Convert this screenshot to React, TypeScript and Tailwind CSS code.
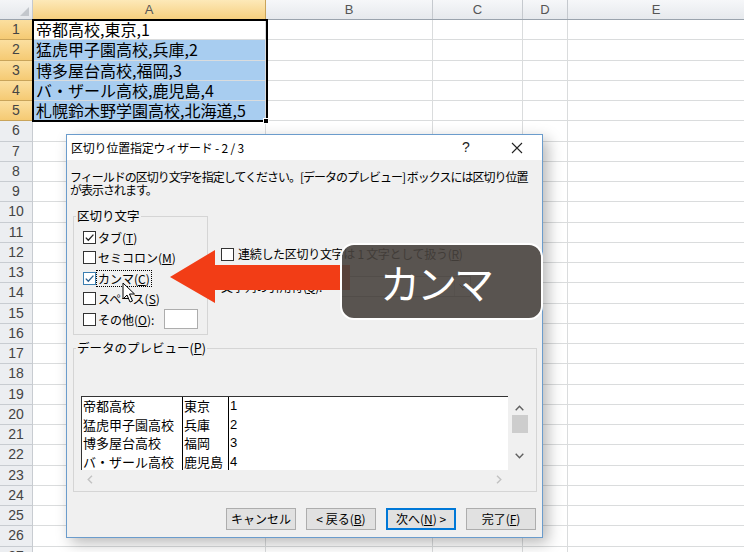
import React from "react";

const JP = "font-['Noto_Sans_CJK_JP',sans-serif]";

const cellsA = [
  "帝都高校,東京,1",
  "猛虎甲子園高校,兵庫,2",
  "博多屋台高校,福岡,3",
  "バ・ザール高校,鹿児島,4",
  "札幌鈴木野学園高校,北海道,5",
];

function Box({ checked, hover }: { checked?: boolean; hover?: boolean }) {
  return (
    <span
      className={
        "w-[13px] h-[13px] shrink-0 bg-white border flex items-center justify-center " +
        (hover ? "border-[#3c7fb1] bg-[#e5f1fb]" : "border-[#333333]")
      }
    >
      {checked && (
        <svg width="11" height="11" viewBox="0 0 11 11">
          <path
            d="M1.8 5.6 L4.3 8.2 L9.4 2.6"
            fill="none"
            stroke={hover ? "#2a5f8f" : "#222"}
            strokeWidth="1.3"
          />
        </svg>
      )}
    </span>
  );
}

function CheckRow({
  children,
  checked,
  hover,
  focus,
  extra,
}: {
  children: React.ReactNode;
  checked?: boolean;
  hover?: boolean;
  focus?: boolean;
  extra?: React.ReactNode;
}) {
  return (
    <div className="h-[20.5px] flex items-center">
      <Box checked={checked} hover={hover} />
      <span
        className={
          "ml-[1px] px-[1px] leading-[15px] " +
          (focus ? "outline outline-1 outline-dotted outline-black" : "")
        }
      >
        {children}
      </span>
      {extra}
    </div>
  );
}

function Sheet() {
  const rows = Array.from({ length: 27 }, (_, i) => i + 1);
  return (
    <div className="flex flex-col">
      <div className="flex h-[20px] border-b border-[#9aa3ad] font-['Liberation_Sans',sans-serif] text-[13px] text-[#555]">
        <div className="w-[33px] shrink-0 bg-linear-to-b from-[#f4f5f7] to-[#e4e7eb] border-r border-[#c5c9ce] relative">
          <svg className="absolute right-[3px] bottom-[3px]" width="9" height="9" viewBox="0 0 9 9">
            <path d="M9 0 L9 9 L0 9 Z" fill="#c3c7cc" />
          </svg>
        </div>
        <div className="w-[233px] shrink-0 bg-linear-to-b from-[#fde9b8] to-[#f6cf7e] border-r border-[#c9a45a] flex items-center justify-center">
          A
        </div>
        <div className="w-[167px] shrink-0 bg-linear-to-b from-[#f6f7f9] to-[#e6e9ed] border-r border-[#c5c9ce] flex items-center justify-center">
          B
        </div>
        <div className="w-[90px] shrink-0 bg-linear-to-b from-[#f6f7f9] to-[#e6e9ed] border-r border-[#c5c9ce] flex items-center justify-center">
          C
        </div>
        <div className="w-[45px] shrink-0 bg-linear-to-b from-[#f6f7f9] to-[#e6e9ed] border-r border-[#c5c9ce] flex items-center justify-center">
          D
        </div>
        <div className="flex-1 bg-linear-to-b from-[#f6f7f9] to-[#e6e9ed] flex items-center justify-center">
          E
        </div>
      </div>
      {rows.map((r) => {
        const sel = r <= 5;
        return (
          <div key={r} className="flex h-[20.25px] shrink-0">
            <div
              className={
                "w-[33px] shrink-0 border-r border-b flex items-center justify-center font-['Liberation_Sans',sans-serif] text-[14px] text-[#444] " +
                (sel
                  ? "bg-linear-to-b from-[#fbdf9f] to-[#f5ca73] border-[#c9a45a]"
                  : "bg-[#eceef1] border-[#c8ccd1]")
              }
            >
              {r}
            </div>
            <div
              className={
                "w-[233px] shrink-0 border-r border-b border-[#dadcdd] pl-[3px] text-[16px] leading-[19px] whitespace-nowrap overflow-visible text-black " +
                JP +
                (r >= 2 && r <= 5 ? " bg-[#a8cdf0]" : "")
              }
            >
              {r <= 5 ? cellsA[r - 1] : ""}
            </div>
            <div className="w-[167px] shrink-0 border-r border-b border-[#dadcdd]" />
            <div className="w-[90px] shrink-0 border-r border-b border-[#dadcdd]" />
            <div className="w-[45px] shrink-0 border-r border-b border-[#dadcdd]" />
            <div className="flex-1 border-b border-[#dadcdd]" />
          </div>
        );
      })}
    </div>
  );
}

function Btn({ children, focus }: { children: React.ReactNode; focus?: boolean }) {
  return (
    <div
      className={
        "w-[70px] h-[22px] flex items-center justify-center bg-[#e1e1e1] text-[12px] border " +
        (focus ? "border-[#0078d7] shadow-[inset_0_0_0_1px_#0078d7]" : "border-[#adadad]")
      }
    >
      {children}
    </div>
  );
}

function Dialog() {
  const preview = [
    ["帝都高校", "東京", "1"],
    ["猛虎甲子園高校", "兵庫", "2"],
    ["博多屋台高校", "福岡", "3"],
    ["バ・ザール高校", "鹿児島", "4"],
  ];
  return (
    <div
      className={
        "absolute left-[66px] top-[134px] w-[477px] h-[404px] border border-[#6b9ccc] bg-[#f0f0f0] shadow-[5px_5px_14px_rgba(0,0,0,0.28)] flex flex-col text-black text-[12px] " +
        JP
      }
    >
      <div className="h-[25px] bg-white flex items-center pl-[4px] shrink-0">
        <span className="flex-1 tracking-[-0.2px]">区切り位置指定ウィザード - 2 / 3</span>
        <span className="w-[14px] text-center text-[14px] font-['Liberation_Sans',sans-serif] text-[#222] mr-[38px]">?</span>
        <svg className="mr-[19px]" width="12" height="12" viewBox="0 0 12 12">
          <path d="M1 1 L11 11 M11 1 L1 11" stroke="#222" strokeWidth="1.1" />
        </svg>
      </div>
      <div className="flex-1 flex flex-col">
        <div className="pt-[10px] pl-[3px] leading-[13px] whitespace-nowrap tracking-[-1px]">
          <div>フィールドの区切り文字を指定してください。[データのプレビュー] ボックスには区切り位置</div>
          <div>が表示されます。</div>
        </div>
        <div className="flex mt-[12px] ml-[6px]">
          <fieldset className="w-[135px] h-[127px] border border-[#d5d5d5] shrink-0">
            <legend className="ml-[2px] px-[1px] leading-[16px] text-[12.5px]">区切り文字</legend>
            <div className="pl-[9px] pt-[3px] flex flex-col">
              <CheckRow checked>
                タブ(<u>T</u>)
              </CheckRow>
              <CheckRow>
                セミコロン(<u>M</u>)
              </CheckRow>
              <CheckRow checked hover focus>
                カンマ(<u>C</u>)
              </CheckRow>
              <CheckRow>
                スペース(<u>S</u>)
              </CheckRow>
              <CheckRow
                extra={<span className="ml-[9px] w-[34px] h-[20px] bg-white border border-[#adadad]" />}
              >
                その他(<u>O</u>):
              </CheckRow>
            </div>
          </fieldset>
          <div className="ml-[13px] mt-[36px] flex flex-col">
            <div className="h-[20px] flex items-center whitespace-nowrap">
              <Box />
              <span className="ml-[4px] tracking-[-0.3px]">
                連続した区切り文字は 1 文字として扱う(<u>R</u>)
              </span>
            </div>
            <div className="mt-[12px] h-[21px] flex items-center whitespace-nowrap">
              <span className="w-[119px] tracking-[-0.3px]">
                文字列の引用符(<u>Q</u>):
              </span>
              <div className="w-[131px] h-[21px] bg-white border border-[#adadad] flex items-center justify-between">
                <span className="pl-[4px] text-[11px]">"</span>
                <span className="w-[16px] h-full border-l border-[#d0d0d0] flex items-center justify-center">
                  <svg width="8" height="5" viewBox="0 0 8 5">
                    <path d="M0.5 0.5 L4 4 L7.5 0.5" fill="none" stroke="#555" />
                  </svg>
                </span>
              </div>
            </div>
          </div>
        </div>
        <fieldset className="mt-[5px] ml-[6px] w-[464px] h-[152px] border border-[#d5d5d5] shrink-0">
          <legend className="ml-[2px] px-[1px] leading-[16px] text-[12.5px]">
            データのプレビュー(<u>P</u>)
          </legend>
          <div className="ml-[7px] mt-[40px] w-[450px] flex flex-col">
            <div className="flex h-[74px]">
              <div className="flex-1 bg-white border-l border-t border-[#333] flex overflow-hidden text-[13px] leading-[18.5px]">
                <div className="w-[101px] border-r border-black pl-[1px] whitespace-nowrap">
                  {preview.map((p) => (
                    <div key={p[0]}>{p[0]}</div>
                  ))}
                </div>
                <div className="w-[46px] border-r border-black pl-[1px] whitespace-nowrap">
                  {preview.map((p) => (
                    <div key={p[1]}>{p[1]}</div>
                  ))}
                </div>
                <div className="flex-1 pl-[1px] font-['Liberation_Sans',sans-serif]">
                  {preview.map((p) => (
                    <div key={p[2]}>{p[2]}</div>
                  ))}
                </div>
              </div>
              <div className="w-[23px] flex flex-col items-center bg-[#f0f0f0]">
                <svg className="mt-[9px]" width="9" height="6" viewBox="0 0 9 6">
                  <path d="M0.7 5.2 L4.5 1.2 L8.3 5.2" fill="none" stroke="#606060" strokeWidth="1.4" />
                </svg>
                <div className="mt-[4px] w-[16px] h-[18px] bg-[#cdcdcd]" />
                <svg className="mt-[20px]" width="9" height="6" viewBox="0 0 9 6">
                  <path d="M0.7 0.8 L4.5 4.8 L8.3 0.8" fill="none" stroke="#606060" strokeWidth="1.4" />
                </svg>
              </div>
            </div>
            <div className="flex h-[18px]">
              <div className="flex-1 flex items-center justify-between px-[6px] bg-[#f0f0f0]">
                <svg width="6" height="9" viewBox="0 0 6 9">
                  <path d="M5 0.7 L1.2 4.5 L5 8.3" fill="none" stroke="#c2c2c2" strokeWidth="1.4" />
                </svg>
                <svg width="6" height="9" viewBox="0 0 6 9">
                  <path d="M1 0.7 L4.8 4.5 L1 8.3" fill="none" stroke="#c2c2c2" strokeWidth="1.4" />
                </svg>
              </div>
              <div className="w-[23px]" />
            </div>
          </div>
        </fieldset>
        <div className="mt-[16px] pr-[6px] flex justify-end gap-[10px]">
          <Btn>キャンセル</Btn>
          <Btn>
            &lt; 戻る(<u>B</u>)
          </Btn>
          <Btn focus>
            次へ(<u>N</u>) &gt;
          </Btn>
          <Btn>
            完了(<u>F</u>)
          </Btn>
        </div>
      </div>
    </div>
  );
}

export default function App() {
  return (
    <div className="relative w-[744px] h-[552px] overflow-hidden bg-white">
      <Sheet />
      {/* selection border over A1:A5 */}
      <div className="absolute left-[32px] top-[19px] w-[236px] h-[103px] border-2 border-black pointer-events-none" />
      <div className="absolute left-[263px] top-[118px] w-[6px] h-[6px] bg-black border border-white" />
      <Dialog />
      {/* red arrow */}
      <svg className="absolute left-[165px] top-[245px]" width="185" height="63" viewBox="0 0 185 63">
        <polygon points="5,32 50,5 50,20 185,20 185,45 50,45 50,58" fill="#f23d16" />
      </svg>
      {/* caption */}
      <div
        className={
          "absolute left-[340px] top-[243px] w-[203px] h-[77px] rounded-[14px] border-2 border-white bg-[rgba(72,67,62,0.9)] flex items-center justify-center text-white text-[40px] leading-none tracking-[-3px] pr-[12px] " +
          JP
        }
      >
        カンマ
      </div>
      {/* mouse cursor */}
      <svg className="absolute left-[122px] top-[282px]" width="14" height="22" viewBox="0 0 14 22">
        <path
          d="M1 1 L1 17 L5 13 L8 20 L10.5 19 L7.5 12 L12.5 12 Z"
          fill="white"
          stroke="black"
          strokeWidth="1"
          strokeLinejoin="round"
        />
      </svg>
    </div>
  );
}
